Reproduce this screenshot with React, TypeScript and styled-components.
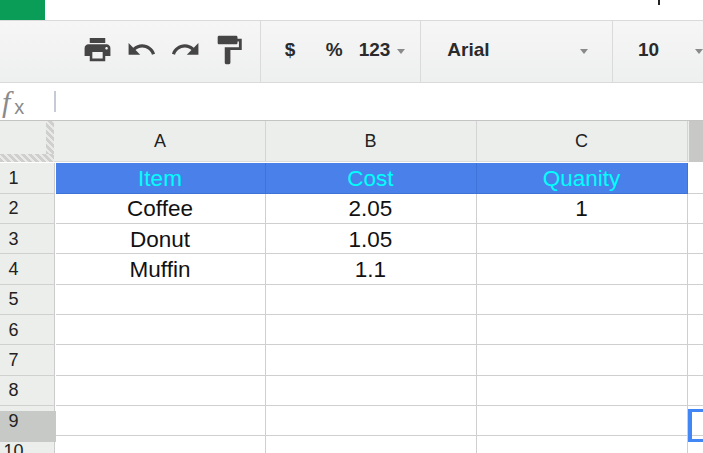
import React from 'react'
import styled, { createGlobalStyle } from 'styled-components'

const rows: string[][] = [
  ['Item', 'Cost', 'Quanity'],
  ['Coffee', '2.05', '1'],
  ['Donut', '1.05', ''],
  ['Muffin', '1.1', ''],
  ['', '', ''],
  ['', '', ''],
  ['', '', ''],
  ['', '', ''],
  ['', '', ''],
  ['', '', ''],
]

const selectedRow = 8

const Icon = ({ d, size, color = '#454545' }: { d: string; size: number; color?: string }) => (
  <svg width={size} height={size} viewBox="0 0 24 24" fill={color}>
    <path d={d} />
  </svg>
)

function App() {
  return (
    <Page>
      <GlobalStyle />
      <TopBar>
        <Logo />
        <MenuTail />
      </TopBar>
      <Toolbar>
        <IconGroup>
          <Icon size={31} d="M19 8H5c-1.66 0-3 1.34-3 3v6h4v4h12v-4h4v-6c0-1.66-1.34-3-3-3zm-3 11H8v-5h8v5zm3-7c-.55 0-1-.45-1-1s.45-1 1-1 1 .45 1 1-.45 1-1 1zm-1-9H6v4h12V3z" />
          <Icon size={31} d="M12.5 8c-2.65 0-5.05.99-6.9 2.6L2 7v9h9l-3.62-3.62c1.39-1.16 3.16-1.88 5.12-1.88 3.54 0 6.55 2.31 7.6 5.5l2.37-.78C21.08 11.03 17.15 8 12.5 8z" />
          <Icon size={31} d="M18.4 10.6C16.55 8.99 14.15 8 11.5 8c-4.65 0-8.58 3.03-9.96 7.22L3.9 16c1.05-3.19 4.05-5.5 7.6-5.5 1.95 0 3.73.72 5.12 1.88L13 16h9V7l-3.6 3.6z" />
          <Icon size={34} d="M18 4V3c0-.55-.45-1-1-1H5c-.55 0-1 .45-1 1v4c0 .55.45 1 1 1h12c.55 0 1-.45 1-1V6h1v4H9v11c0 .55.45 1 1 1h2c.55 0 1-.45 1-1v-9h8V4h-3z" />
        </IconGroup>
        <FormatGroup>
          <ToolText $width={41}>$</ToolText>
          <ToolText $width={33}>%</ToolText>
          <ToolText $width={38}>123</ToolText>
          <Caret />
        </FormatGroup>
        <FontGroup>
          <ToolText $width={133}>Arial</ToolText>
          <Caret />
        </FontGroup>
        <SizeGroup>
          <ToolText $width={57}>10</ToolText>
          <Caret />
        </SizeGroup>
      </Toolbar>
      <FormulaBar>
        <FxLabel>
          f<sub>x</sub>
        </FxLabel>
        <FormulaDivider />
      </FormulaBar>
      <HeaderRow>
        <Corner>
          <HatchRight />
          <HatchBottom />
        </Corner>
        <ColHead>A</ColHead>
        <ColHead>B</ColHead>
        <ColHead>C</ColHead>
        <ScrollStub />
      </HeaderRow>
      <Sheet>
        {rows.map((row, i) => (
          <Row key={i}>
            <RowHead>
              <RowNum $active={i === selectedRow}>{i + 1}</RowNum>
            </RowHead>
            {row.map((cell, j) => (
              <Cell key={j} $head={i === 0}>
                {cell}
              </Cell>
            ))}
            <Cell $head={false} />
          </Row>
        ))}
        <RowHighlight />
        <Selection />
      </Sheet>
    </Page>
  )
}

export default App

const GlobalStyle = createGlobalStyle`
  html, body {
    margin: 0;
    padding: 0;
    background: #fff;
  }
`

const Page = styled.div`
  position: relative;
  width: 703px;
  height: 453px;
  overflow: hidden;
  background: #fff;
  font-family: "Liberation Sans", Arial, sans-serif;
  color: #222;
`

const TopBar = styled.div`
  display: flex;
  justify-content: space-between;
  height: 20px;
`

const Logo = styled.div`
  width: 45px;
  background: #0a9d58;
`

const MenuTail = styled.div`
  width: 2px;
  height: 5px;
  margin-right: 43px;
  background: #222;
`

const Toolbar = styled.div`
  display: flex;
  height: 61px;
  border-top: 1px solid #dadada;
  border-bottom: 1px solid #dadada;
  background: linear-gradient(#f5f6f5, #eef0ef);
`

const Group = styled.div`
  display: flex;
  align-items: center;
  box-sizing: border-box;
  padding-bottom: 3px;
  border-right: 1px solid #dadada;
`

const IconGroup = styled(Group)`
  width: 261px;
  padding: 0 0 4px 82px;
  gap: 13px;

  svg {
    flex: none;
  }

  svg:last-child {
    margin-left: -2px;
  }
`

const FormatGroup = styled(Group)`
  width: 161px;
  padding-left: 24px;
`

const FontGroup = styled(Group)`
  width: 192px;
  padding-left: 26px;
`

const SizeGroup = styled(Group)`
  flex: 1;
  padding-left: 25px;
  border-right: none;
`

const ToolText = styled.span<{ $width: number }>`
  width: ${(p) => p.$width}px;
  font-size: 19px;
  font-weight: 700;
  color: #2b2b2b;
  white-space: nowrap;
`

const Caret = styled.span`
  flex: none;
  width: 0;
  height: 0;
  margin-top: 2px;
  border-left: 4.5px solid transparent;
  border-right: 4.5px solid transparent;
  border-top: 5px solid #8a8a8a;
`

const FormulaBar = styled.div`
  display: flex;
  align-items: center;
  height: 37px;
  background: #fff;
`

const FxLabel = styled.div`
  width: 54px;
  padding-left: 2px;
  box-sizing: border-box;
  font-family: "Liberation Serif", serif;
  font-style: italic;
  font-size: 30px;
  line-height: 27px;
  color: #8a8a8a;

  sub {
    font-family: "Liberation Sans", sans-serif;
    font-style: normal;
    font-size: 20px;
    line-height: 0;
    vertical-align: -2px;
    margin-left: 4px;
  }
`

const FormulaDivider = styled.div`
  width: 2px;
  height: 21px;
  background: #c5cad6;
`

const HeaderRow = styled.div`
  display: grid;
  grid-template-columns: 56px 210px 211px 211px 1fr;
  height: 40px;
  border-top: 1px solid #c4c4c4;
  border-bottom: 1px solid #dcdcdc;
  background: #eceeeb;
`

const Corner = styled.div`
  position: relative;
`

const hatch = `repeating-linear-gradient(45deg, #cfd0ce 0 3px, #e9e9e8 3px 5px)`

const HatchRight = styled.div`
  position: absolute;
  top: 0;
  right: 2px;
  bottom: -1px;
  width: 8px;
  background: ${hatch};
`

const HatchBottom = styled.div`
  position: absolute;
  left: 0;
  right: 2px;
  bottom: -1px;
  height: 8px;
  background: ${hatch};
`

const ColHead = styled.div`
  display: flex;
  align-items: center;
  justify-content: center;
  padding-right: 1px;
  border-right: 1px solid #d4d4d4;
  font-size: 18px;
  color: #222;
`

const ScrollStub = styled.div`
  margin: 0 0 -1px 1px;
  background: #c8c9c7;
`

const Sheet = styled.div`
  position: relative;
  padding-top: 1px;
`

const Row = styled.div`
  display: grid;
  grid-template-columns: 56px 210px 211px 211px 1fr;
  height: 30.35px;

  &:first-child {
    height: 30.5px;
  }
`

const RowHead = styled.div`
  display: flex;
  align-items: center;
  justify-content: center;
  box-sizing: border-box;
  padding: 1px 27px 0 0;
  border-right: 1px solid #ccc;
  border-bottom: 1px solid #d0d0d0;
  margin-right: 1px;
  background: #eceeeb;
  font-size: 18px;
  color: #222;
`

const RowNum = styled.span<{ $active: boolean }>`
  position: ${(p) => (p.$active ? 'relative' : 'static')};
  z-index: ${(p) => (p.$active ? 2 : 'auto')};
`

const Cell = styled.div<{ $head: boolean }>`
  display: flex;
  align-items: center;
  justify-content: center;
  box-sizing: border-box;
  padding: 2px 1px 0 0;
  border-right: 1px solid ${(p) => (p.$head ? '#3f73d6' : '#cfcfcf')};
  border-bottom: 1px solid ${(p) => (p.$head ? '#3f73d6' : '#cfcfcf')};
  background: ${(p) => (p.$head ? '#4a80ea' : '#fff')};
  color: ${(p) => (p.$head ? '#00ffff' : '#111')};
  font-size: 22.5px;

  &:last-child {
    border-right: none;
    background: #fff;
    border-bottom-color: #cfcfcf;
  }
`

const RowHighlight = styled.div`
  position: absolute;
  top: 249px;
  left: 0;
  width: 56px;
  height: 31px;
  background: #c7c9c6;
  z-index: 1;
`

const Selection = styled.div`
  position: absolute;
  top: 247px;
  left: 688px;
  width: 20px;
  height: 33px;
  box-sizing: border-box;
  border: 3px solid #4285f4;
  border-left-width: 4px;
`
